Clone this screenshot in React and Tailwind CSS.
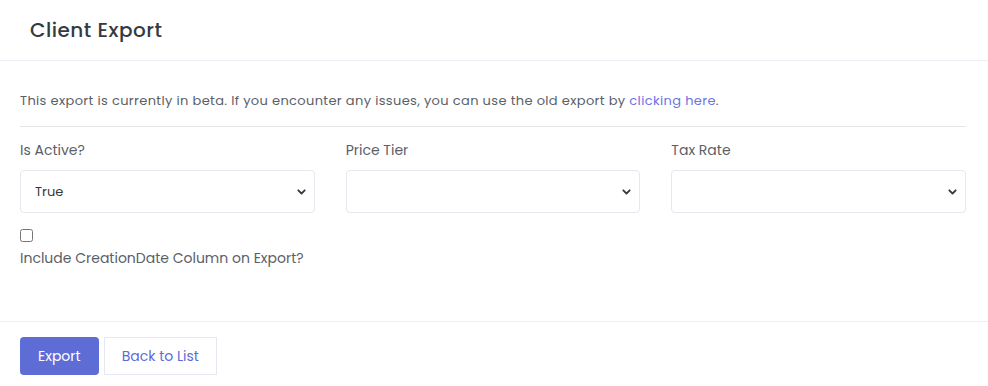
import React from 'react';

const Chevron = () => (
  <svg className="pointer-events-none absolute right-[9px] top-1/2 -translate-y-1/2" width="9" height="6" viewBox="0 0 9 6">
    <path d="M1.3 1.3 L4.5 4.5 L7.7 1.3" fill="none" stroke="#343a40" strokeWidth="1.8" strokeLinecap="round" strokeLinejoin="round" />
  </svg>
);

const SelectField = ({ label, value }) => (
  <div className="flex flex-1 flex-col">
    <label className="mb-[9px] text-[14px] leading-[21px] text-[#5a6068]">{label}</label>
    <div className="relative">
      <select className="h-[43px] w-full appearance-none rounded-[4px] border border-[#e6e8ef] bg-white pl-[14px] text-[13px] text-[#343a40] outline-none" defaultValue={value}>
        {value ? <option>{value}</option> : <option></option>}
      </select>
      <Chevron />
    </div>
  </div>
);

const App = () => {
  return (
    <div className="min-h-[386px] w-[988px] bg-white font-['Poppins','Open_Sans',sans-serif] text-[#5a6068]">
      <div className="flex h-[61px] items-center border-b border-[#eceef3] px-[30px]">
        <h4 className="text-[20px] font-medium tracking-[0.5px] text-[#343a40]">Client Export</h4>
      </div>
      <div className="pl-[20px] pr-[22px] pt-[30px] pb-[52px]">
        <p className="text-[13px] leading-[20px] tracking-[0.35px]">
          This export is currently in beta. If you encounter any issues, you can use the old export by{' '}
          <a href="#" className="text-[#6c74e0]">clicking here</a>.
        </p>
        <hr className="mt-[15px] mb-[13px] border-t border-[#e4e6ea]" />
        <div className="flex gap-[31px]">
          <SelectField label="Is Active?" value="True" />
          <SelectField label="Price Tier" />
          <SelectField label="Tax Rate" />
        </div>
        <div className="mt-[16px] flex flex-col">
          <input type="checkbox" className="h-[13px] w-[13px] accent-[#5e6cd6]" />
          <label className="mt-[6px] text-[14px] leading-[21px]">Include CreationDate Column on Export?</label>
        </div>
      </div>
      <div className="flex gap-[5px] border-t border-[#eceef3] px-[20px] pt-[15px]">
        <button className="h-[38px] rounded-[4px] bg-[#5e6cd6] px-[18px] text-[14px] text-white">Export</button>
        <button className="h-[38px] border border-[#e6e8ef] bg-white px-[17px] text-[14px] text-[#5e6cd6]">Back to List</button>
      </div>
    </div>
  );
};

export default App;
